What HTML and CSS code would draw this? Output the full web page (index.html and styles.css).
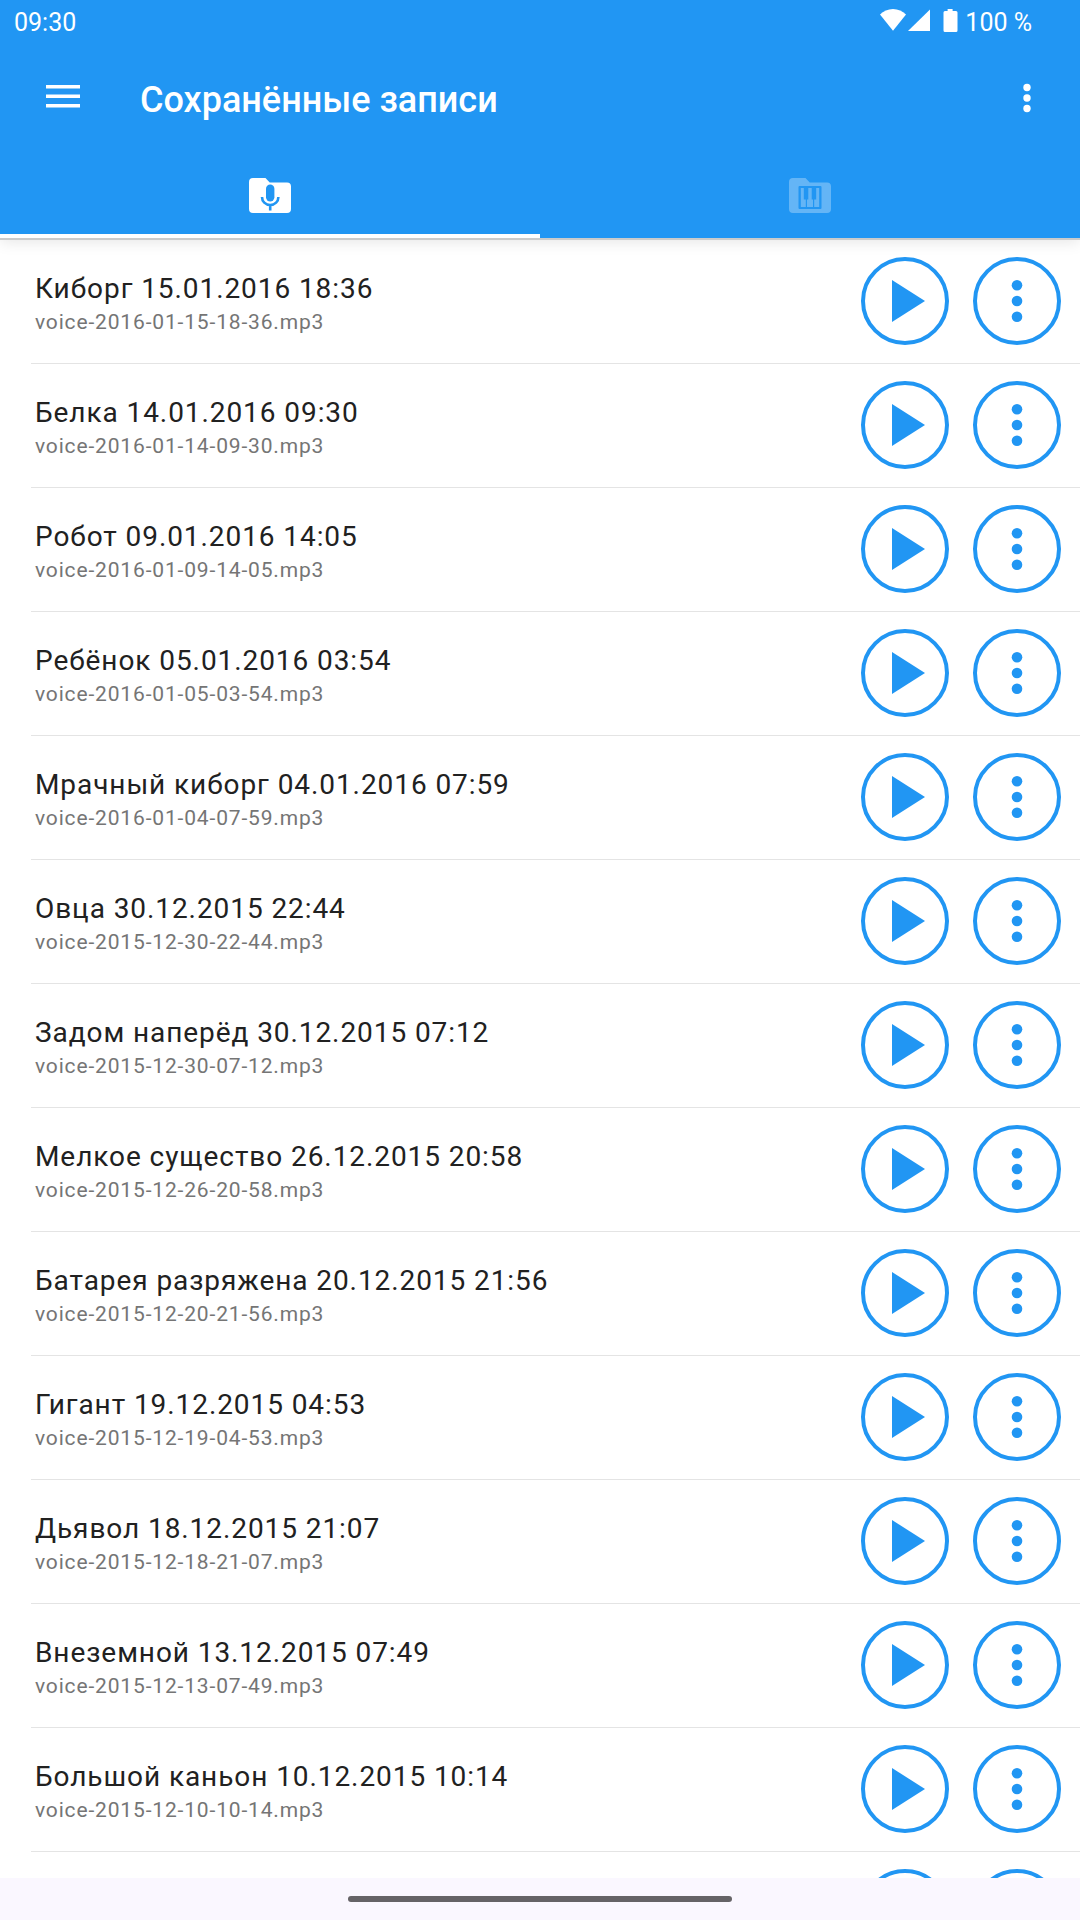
FILE: index.html
```html
<!DOCTYPE html>
<html lang="ru">
<head>
<meta charset="utf-8">
<meta name="viewport" content="width=device-width, initial-scale=1">
<title>Сохранённые записи</title>
<link rel="stylesheet" href="styles.css">
</head>
<body>
<svg class="sprite" aria-hidden="true">
  <symbol id="play" viewBox="0 0 88 88"><path d="M31 23v42l33-21z"/></symbol>
  <symbol id="dots" viewBox="0 0 88 88"><circle cx="44" cy="28.2" r="5.3"/><circle cx="44" cy="44" r="5.3"/><circle cx="44" cy="59.8" r="5.3"/></symbol>
</svg>
<div class="app">
  <header class="header">
    <div class="status">
      <span class="time">09:30</span>
      <svg class="signals" viewBox="0 0 78 24" aria-hidden="true">
        <path d="M13 21.8 0 5.6C3.400 2.200 8 0 13 0s9.600 2.200 13 5.600z"/>
        <path d="M50 .4V22H28z"/>
        <path d="M67.600 0h5v2H76q1.500 0 1.500 1.500v18Q77.500 23 76 23H65q-1.500 0-1.500-1.500v-18Q63.500 2 65 2h2.600z"/>
      </svg>
      <span>100 %</span>
    </div>
    <div class="toolbar">
      <button class="icon-button" aria-label="Меню"><svg viewBox="0 0 42 42"><path d="M4 7h34v3.600H4zM4 16.400h34V20H4zM4 25.900h34v3.600H4z"/></svg></button>
      <h1 class="title">Сохранённые записи</h1>
      <button class="icon-button" aria-label="Ещё"><svg viewBox="0 0 42 42"><circle cx="21" cy="9.500" r="3.700"/><circle cx="21" cy="20" r="3.700"/><circle cx="21" cy="30.500" r="3.700"/></svg></button>
    </div>
    <nav class="tabs">
      <button class="tab tab-active" aria-label="Голос">
        <svg viewBox="0 0 42 35"><path d="M4 0h12.500l4.200 4.500H38q4 0 4 4V31q0 4-4 4H4q-4 0-4-4V4q0-4 4-4z"/><rect class="cut" x="17" y="6.500" width="8.400" height="17" rx="4.200"/><path class="cut-line" d="M13 19c0 4.500 3.400 8 8.200 8s8.200-3.500 8.200-8M21.200 27v5.500"/></svg>
      </button>
      <button class="tab" aria-label="Музыка">
        <svg viewBox="0 0 42 35"><path d="M4 0h12.500l4.200 4.500H38q4 0 4 4V31q0 4-4 4H4q-4 0-4-4V4q0-4 4-4z"/><rect class="cut" x="9.500" y="8" width="23" height="23" rx="1"/><path d="M11.800 10h3v11.500h2V29h-5zM19.300 10h3.400v11.500h1.300V29h-6v-7.500h1.300zM27.200 10h3v19h-5v-7.500h2z"/></svg>
      </button>
    </nav>
  </header>
  <main class="list-wrap">
    <ul class="list" id="list"></ul>
  </main>
  <footer class="navbar"><span class="handle"></span></footer>
</div>
<script src="app.js"></script>
</body>
</html>
```
FILE: app.js
```js
const recordings = [
  ['Киборг 15.01.2016 18:36', 'voice-2016-01-15-18-36.mp3'],
  ['Белка 14.01.2016 09:30', 'voice-2016-01-14-09-30.mp3'],
  ['Робот 09.01.2016 14:05', 'voice-2016-01-09-14-05.mp3'],
  ['Ребёнок 05.01.2016 03:54', 'voice-2016-01-05-03-54.mp3'],
  ['Мрачный киборг 04.01.2016 07:59', 'voice-2016-01-04-07-59.mp3'],
  ['Овца 30.12.2015 22:44', 'voice-2015-12-30-22-44.mp3'],
  ['Задом наперёд 30.12.2015 07:12', 'voice-2015-12-30-07-12.mp3'],
  ['Мелкое существо 26.12.2015 20:58', 'voice-2015-12-26-20-58.mp3'],
  ['Батарея разряжена 20.12.2015 21:56', 'voice-2015-12-20-21-56.mp3'],
  ['Гигант 19.12.2015 04:53', 'voice-2015-12-19-04-53.mp3'],
  ['Дьявол 18.12.2015 21:07', 'voice-2015-12-18-21-07.mp3'],
  ['Внеземной 13.12.2015 07:49', 'voice-2015-12-13-07-49.mp3'],
  ['Большой каньон 10.12.2015 10:14', 'voice-2015-12-10-10-14.mp3'],
  ['', '']
];

document.getElementById('list').innerHTML = recordings.map(([name, file]) => `
  <li class="row">
    <div class="text"><div class="name">${name}</div><div class="file">${file}</div></div>
    <button class="round" aria-label="Воспроизвести"><svg><use href="#play"/></svg></button>
    <button class="round" aria-label="Действия"><svg><use href="#dots"/></svg></button>
  </li>`).join('');
```
FILE: styles.css
```css
* { box-sizing: border-box; }
body { margin: 0; background: #fff; font-family: Roboto, "Noto Sans", sans-serif; }
button { border: 0; padding: 0; background: none; color: inherit; cursor: pointer; }
svg { display: block; fill: currentColor; }
.sprite { display: none; }

.app { display: flex; flex-direction: column; height: 100vh; }

.header {
  position: relative;
  flex: none;
  background: #2196f3;
  color: #fff;
  box-shadow: 0 2px 0 #cbcbcb, 0 4px 14px rgba(0, 0, 0, .1);
}
.status { display: flex; align-items: center; height: 44px; padding: 2px 48px 0 14px; font-size: 25px; line-height: 42px; }
.time { flex: 1; }
.signals { width: 78px; height: 24px; margin: 0 7px 4px 0; }

.toolbar { display: flex; align-items: center; height: 110px; padding: 0 32px 0 42px; }
.icon-button { flex: none; width: 42px; height: 42px; }
.icon-button svg { width: 42px; height: 42px; }
.title { flex: 1; margin: 0; padding: 2px 0 0 56px; font-size: 36px; font-weight: 500; line-height: 42px; }

.tabs { display: flex; height: 84px; }
.tab { display: flex; flex: 1; align-items: center; justify-content: center; padding-top: 2px; border-bottom: 4px solid transparent; }
.tab svg { width: 42px; height: 35px; opacity: .3; }
.tab-active { border-bottom-color: #fff; }
.tab-active svg { opacity: 1; }
.cut { fill: #2196f3; }
.cut-line { fill: none; stroke: #2196f3; stroke-width: 2.600; }

.list-wrap { flex: 1; min-height: 0; overflow-y: auto; scrollbar-width: none; }
.list { margin: 0; padding: 2px 0 0 31px; list-style: none; }
.row { display: flex; align-items: center; gap: 24px; height: 124px; padding: 0 19px 2px 4px; border-bottom: 1px solid #e4e4e4; }
.text { flex: 1; min-width: 0; padding-top: 6px; }
.name { color: #212121; font-size: 28px; line-height: 36px; letter-spacing: .033em; }
.file { color: #757575; font-size: 21px; line-height: 30px; letter-spacing: .04em; }
.round { flex: none; width: 88px; height: 88px; border: 4px solid #2196f3; border-radius: 50%; color: #2196f3; }
.round svg { width: 88px; height: 88px; margin: -4px; }

.navbar { display: flex; flex: none; align-items: center; justify-content: center; height: 42px; background: #faf7ff; }
.handle { width: 384px; height: 6px; border-radius: 3px; background: #656367; }
```
